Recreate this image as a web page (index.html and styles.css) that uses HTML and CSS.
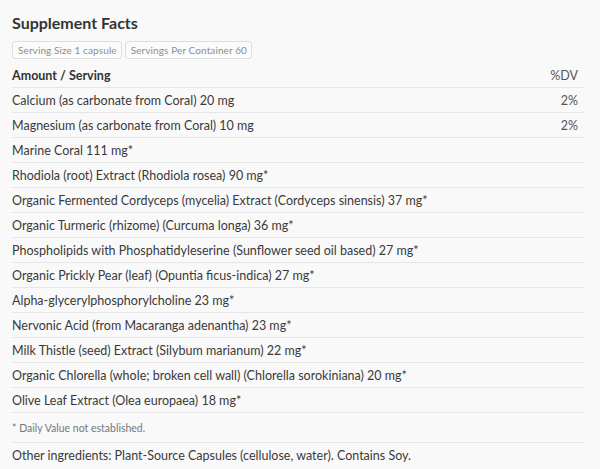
FILE: index.html
```html
<!DOCTYPE html>
<html>
<head>
<meta charset="utf-8">
<link rel="stylesheet" href="styles.css">
</head>
<body>
<div class="panel">
  <h2 class="title">Supplement Facts</h2>
  <div class="chips">
    <span class="chip">Serving Size 1 capsule</span>
    <span class="chip">Servings Per Container 60</span>
  </div>
  <div class="row head"><span>Amount / Serving</span><span>%DV</span></div>
  <div class="row"><span>Calcium (as carbonate from Coral) 20 mg</span><span class="dv">2%</span></div>
  <div class="row"><span>Magnesium (as carbonate from Coral) 10 mg</span><span class="dv">2%</span></div>
  <div class="row"><span>Marine Coral 111 mg*</span></div>
  <div class="row"><span>Rhodiola (root) Extract (Rhodiola rosea) 90 mg*</span></div>
  <div class="row"><span>Organic Fermented Cordyceps (mycelia) Extract (Cordyceps sinensis) 37 mg*</span></div>
  <div class="row"><span>Organic Turmeric (rhizome) (Curcuma longa) 36 mg*</span></div>
  <div class="row"><span>Phospholipids with Phosphatidyleserine (Sunflower seed oil based) 27 mg*</span></div>
  <div class="row"><span>Organic Prickly Pear (leaf) (Opuntia ficus-indica) 27 mg*</span></div>
  <div class="row"><span>Alpha-glycerylphosphorylcholine 23 mg*</span></div>
  <div class="row"><span>Nervonic Acid (from Macaranga adenantha) 23 mg*</span></div>
  <div class="row"><span>Milk Thistle (seed) Extract (Silybum marianum) 22 mg*</span></div>
  <div class="row"><span>Organic Chlorella (whole; broken cell wall) (Chlorella sorokiniana) 20 mg*</span></div>
  <div class="row"><span>Olive Leaf Extract (Olea europaea) 18 mg*</span></div>
  <div class="note">* Daily Value not established.</div>
  <div class="other">Other ingredients: Plant-Source Capsules (cellulose, water). Contains Soy.</div>
</div>
</body>
</html>
```
FILE: styles.css
```css
html, body {
  margin: 0;
  background: #f9f9f9;
}
body {
  font-family: Lato, "Noto Sans", sans-serif;
  color: #3a3a3a;
}
.panel {
  padding: 12px 16px 0 12px;
}
.title {
  margin: 0;
  font-size: 16px;
  font-weight: 700;
  line-height: 22px;
  color: #333;
}
.chips {
  display: flex;
  gap: 3px;
  margin-top: 7px;
}
.chip {
  font-size: 10px;
  line-height: 11px;
  letter-spacing: 0.1px;
  color: #8e8e8e;
  border: 1px solid #dedede;
  border-radius: 3px;
  padding: 3px 4px 2px 5px;
  background: #fbfbfb;
}
.row {
  display: flex;
  justify-content: space-between;
  align-items: center;
  height: 24px;
  border-bottom: 1px solid #e6e6e6;
  font-size: 12.5px;
  padding-right: 6px;
}
.row.head {
  font-weight: 700;
  color: #333;
  margin-top: 4px;
}
.row.head span:last-child {
  font-weight: 400;
  color: #555;
}
.dv {
  color: #555;
}
.note {
  font-size: 10.5px;
  color: #777;
  height: 29px;
  display: flex;
  align-items: center;
  border-bottom: 1px solid #e6e6e6;
}
.other {
  font-size: 12.5px;
  height: 24px;
  display: flex;
  align-items: center;
}
```
